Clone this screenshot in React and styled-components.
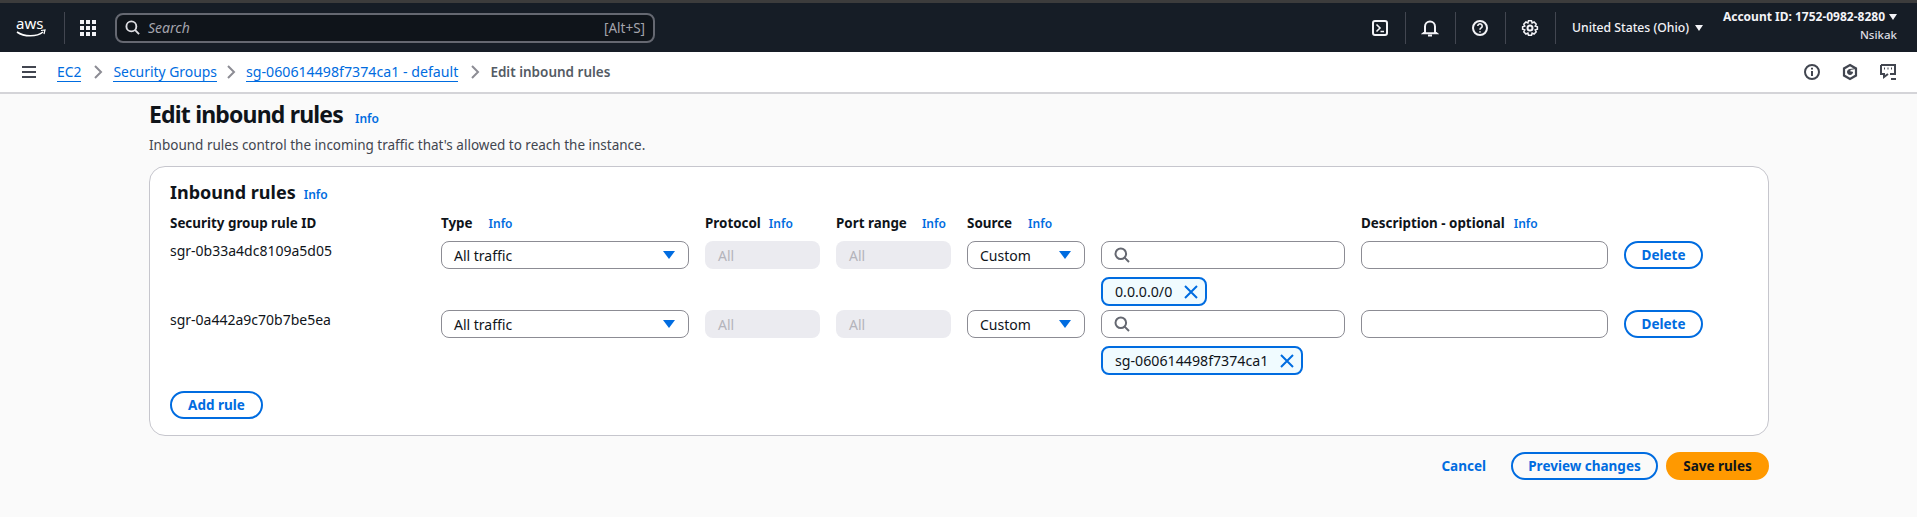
import React from "react";
import styled, { createGlobalStyle } from "styled-components";

const Global = createGlobalStyle`
  html, body { margin: 0; padding: 0; background: #fafafa; }
  body { font-family: "Noto Sans", "Liberation Sans", sans-serif; font-size: 14px; color: #0f141a; overflow: hidden; }
  * { box-sizing: border-box; }
`;
const Page = styled.div`height: 517px; display: flex; flex-direction: column; background: #fafafa;`;
const TopStrip = styled.div`height: 3px; background: #3c3c3c;`;
const TopBar = styled.header`
  height: 49px; background: #161d26; color: #f3f3f7; display: flex; align-items: center; padding-left: 16px;
`;
const Logo = styled.svg`width: 30px; height: 24px; display: block; flex: none; overflow: visible;`;
const BarDivider = styled.span`
  width: 1px; height: 32px; background: #424650; flex: none; margin: ${p => p.$m || "0"};
`;
const Waffle = styled.div`
  display: grid; grid-template-columns: repeat(3, 4px); grid-auto-rows: 4px; gap: 2px; flex: none; margin: 0 19px 0 15px;
  span { background: #f3f3f7; }
`;
const SearchBar = styled.div`
  width: 540px; height: 30px; flex: none; background: #0f141a; border: 2px solid #656871; border-radius: 8px;
  display: flex; align-items: center; padding: 0 8px; gap: 8px; font-size: 14px; color: #a4a4ad;
`;
const SearchHint = styled.i`flex: 1; font-size: 14px;`;
const Shortcut = styled.span`font-size: 13.5px;`;
const Spacer = styled.div`flex: 1;`;
const BarIcon = styled.span`width: 18px; height: 18px; flex: none; display: flex; color: #f3f3f7;`;
const Region = styled.span`font-size: 12.2px; font-weight: 500; display: flex; align-items: center; gap: 6px; margin: 0 0 0 16px; white-space: nowrap; width: 151px;`;
const Caret = styled.span`
  width: 0; height: 0; border-left: 4px solid transparent; border-right: 4px solid transparent; border-top: 6px solid currentColor; flex: none;
`;
const Account = styled.div`display: flex; flex-direction: column; align-items: flex-end; width: 194px; padding-right: 20px; font-size: 12px; line-height: 18px; margin-top: -4px;`;
const AccountId = styled.strong`font-weight: 700; display: flex; align-items: center; gap: 4px; white-space: nowrap; font-size: 12px;`;
const AccountName = styled.span`font-weight: 500; font-size: 11.5px; color: #dedee3;`;

const CrumbBar = styled.nav`
  height: 42px; background: #fff; border-bottom: 2px solid #d4d4d8; display: flex; align-items: center; padding: 0 20px 0 22px;
`;
const Hamburger = styled.div`
  width: 14px; display: flex; flex-direction: column; gap: 3px; margin-right: 21px; flex: none;
  span { height: 2px; background: #424650; }
`;
const CrumbLink = styled.a`color: #006ce0; font-size: ${p => p.$size || 13.9}px; border-bottom: 1px solid #006ce0; line-height: 18px; white-space: nowrap;`;
const CrumbSep = styled.svg`width: 10px; height: 14px; margin: 0 10px 0 ${p => p.$left || 12}px; flex: none;`;
const CrumbCurrent = styled.span`font-weight: 600; font-size: 13.5px; color: #545b64; white-space: nowrap;`;
const CrumbIcons = styled.div`margin-left: auto; display: flex; gap: 20px; align-items: center; color: #424650;`;

const Main = styled.main`padding: 5px 148px 0 149px; display: flex; flex-direction: column;`;
const Title = styled.h1`margin: 0; font-size: 23px; letter-spacing: -0.82px; line-height: 30px; font-weight: 700; display: flex; align-items: baseline; gap: 12px;`;
const Info = styled.a`color: #006ce0; font-size: 12px; font-weight: 600; line-height: 16px; letter-spacing: 0;`;
const Subtitle = styled.p`margin: 6px 0 0; font-size: 13.5px; line-height: 20px; color: #424650;`;
const Card = styled.section`
  margin-top: 11px; height: 270px; background: #fff; border: 1px solid #c6c6cd; border-radius: 16px; padding: 12px 20px 0;
`;
const CardTitle = styled.h2`margin: 0; font-size: 18px; line-height: 26px; font-weight: 700; display: flex; align-items: baseline; gap: 8px;`;
const Grid = styled.div`
  display: grid; grid-template-columns: 255px 248px 115px 115px 118px 244px 247px 79px; column-gap: 16px; align-items: start;
`;
const Head = styled.div`margin: 8px 0 8px; height: 20px; font-size: 13.4px; font-weight: 700; line-height: 20px; display: flex; align-items: baseline; gap: ${p => p.$gap || 16}px; white-space: nowrap;`;
const RuleId = styled.div`height: 28px; line-height: 20px; font-size: 14px; white-space: nowrap;`;
const FieldBox = styled.div`
  height: 28px; border: 1px solid #8c8c94; border-radius: 8px; background: #fff; display: flex; align-items: center;
  padding: 0 13px 0 12px; font-size: 14px; justify-content: space-between; color: #0f141a;
`;
const DisabledBox = styled.div`
  height: 28px; border-radius: 8px; background: #ebebf0; color: #b4b4bb; display: flex; align-items: center; padding: 0 13px; font-size: 14px;
`;
const ArrowDown = styled.span`
  width: 0; height: 0; border-left: 6px solid transparent; border-right: 6px solid transparent; border-top: 8px solid #006ce0; flex: none;
`;
const SearchField = styled(FieldBox)`justify-content: flex-start; padding-left: 12px; color: #656871;`;
const SourceCell = styled.div`display: flex; flex-direction: column; align-items: flex-start; gap: 8px;`;
const FullField = styled.div`width: 100%;`;
const Chip = styled.div`
  height: 29px; border: 2px solid #006ce0; border-radius: 8px; background: #f0fbff; display: inline-flex; align-items: center; gap: 11px; padding: 0 6px 0 12px; font-size: 14.2px; white-space: nowrap;
`;
const RowGap = styled.div`grid-column: 1 / -1; height: ${p => p.$h}px;`;
const PillButton = styled.button`
  font: inherit; font-weight: 700; font-size: 13.5px; height: 28px; border: 2px solid #006ce0; border-radius: 20px; background: #fff; color: #006ce0;
  padding: 0; width: ${p => p.$w}px; display: flex; align-items: center; justify-content: center; white-space: nowrap;
`;
const AddRow = styled.div`margin-top: 16px;`;
const Footer = styled.div`display: flex; justify-content: flex-end; align-items: center; margin-top: 16px;`;
const TextButton = styled.a`color: #006ce0; font-weight: 700; font-size: 13.5px; margin-right: 25px;`;
const PrimaryButton = styled(PillButton)`background: #ff9900; border-color: #ff9900; color: #0f141a; margin-left: 8px;`;
const FooterPreview = styled(PillButton)`background: transparent;`;

const Mag = ({ size = 16, color = "currentColor" }) => (
  <svg width={size} height={size} viewBox="0 0 16 16" fill="none" stroke={color} strokeWidth="2" style={{ flex: "none" }}>
    <circle cx="6.8" cy="6.8" r="5.3" /><path d="M10.6 10.6 15 15" />
  </svg>
);
const Cross = () => (
  <svg width="16" height="16" viewBox="0 0 16 16" fill="none" stroke="#006ce0" strokeWidth="2" style={{ flex: "none" }}>
    <path d="M2 2l12 12M14 2 2 14" />
  </svg>
);
const Chevron = ({ left }) => (
  <CrumbSep $left={left} viewBox="0 0 10 14" fill="none" stroke="#8c8c94" strokeWidth="2"><path d="M2 1l6 6-6 6" /></CrumbSep>
);
const Svg18 = ({ children }) => (
  <svg width="18" height="18" viewBox="0 0 18 18" fill="none" stroke="currentColor" strokeWidth="2">{children}</svg>
);

const rows = [
  { id: "sgr-0b33a4dc8109a5d05", chip: "0.0.0.0/0" },
  { id: "sgr-0a442a9c70b7be5ea", chip: "sg-060614498f7374ca1" },
];

export default function App() {
  return (
    <Page>
      <Global />
      <TopStrip />
      <TopBar>
        <Logo viewBox="0 0 30 24" fill="none">
          <text x="0" y="13" fontFamily="Noto Sans" fontSize="15" fill="#fff">aws</text>
          <path d="M1 16c7 5 20 5 26 0" stroke="#fff" strokeWidth="1.6" />
          <path d="M25 14.5l4-.5-1 4" stroke="#fff" strokeWidth="1.2" />
        </Logo>
        <BarDivider $m="0 0 0 18px" />
        <Waffle>{Array.from({ length: 9 }, (_, i) => <span key={i} />)}</Waffle>
        <SearchBar>
          <Mag size={15} color="#dedee3" />
          <SearchHint>Search</SearchHint>
          <Shortcut>[Alt+S]</Shortcut>
        </SearchBar>
        <Spacer />
        <BarIcon>
          <Svg18><rect x="2" y="2" width="14" height="14" rx="2" /><path d="M5.5 5.5 9 9l-3.5 3.5M9.5 12.5H13" strokeWidth="1.6" /></Svg18>
        </BarIcon>
        <BarDivider $m="0 15px 0 16px" />
        <BarIcon>
          <Svg18><path d="M4 13V7.5a5 5 0 0 1 10 0V13l1.5 1.2H2.5z" /><path d="M7 16.5h4" /></Svg18>
        </BarIcon>
        <BarDivider $m="0 15px 0 16px" />
        <BarIcon>
          <Svg18><circle cx="9" cy="9" r="7" /><path d="M6.8 7a2.2 2.2 0 1 1 3.4 1.9c-.8.5-1.2 1-1.2 1.8" strokeWidth="1.6" /><path d="M9 12.2v1.4" strokeWidth="1.6" /></Svg18>
        </BarIcon>
        <BarDivider $m="0 15px 0 16px" />
        <BarIcon>
          <Svg18><circle cx="9" cy="9" r="2.5" /><path d="M7.5 1.8h3l.6 2.2 2-1 2.1 2.1-1 2 2.2.6v2.6l-2.2.6 1 2-2.1 2.1-2-1-.6 2.2h-3l-.6-2.2-2 1-2.1-2.1 1-2-2.2-.6V7.7l2.2-.6-1-2L4.9 3l2 1z" strokeWidth="1.5" /></Svg18>
        </BarIcon>
        <BarDivider $m="0 0 0 16px" />
        <Region>United States (Ohio) <Caret /></Region>
        <Account>
          <AccountId>Account ID: 1752-0982-8280 <Caret /></AccountId>
          <AccountName>Nsikak</AccountName>
        </Account>
      </TopBar>
      <CrumbBar>
        <Hamburger><span /><span /><span /></Hamburger>
        <CrumbLink>EC2</CrumbLink><Chevron />
        <CrumbLink>Security Groups</CrumbLink><Chevron left={9} />
        <CrumbLink $size={14.2}>sg-060614498f7374ca1 - default</CrumbLink><Chevron />
        <CrumbCurrent>Edit inbound rules</CrumbCurrent>
        <CrumbIcons>
          <Svg18><circle cx="9" cy="9" r="7" /><path d="M9 8v5M9 4.8v1.8" /></Svg18>
          <Svg18><path d="M9 2l6 3.5v7L9 16l-6-3.5v-7z" strokeWidth="2.2" /><path d="M9 6.5a2.5 2.5 0 1 0 2.5 2.5L9 9zM9 6.5l6-1" fill="currentColor" strokeWidth="1" /></Svg18>
          <Svg18><path d="M2 2h14v9h-5M2 2v9h3v3l4-3" /><path d="M5 5.5h1M8.5 5.5h1M12 5.5h1" /><path d="M12 16h5" /></Svg18>
        </CrumbIcons>
      </CrumbBar>
      <Main>
        <Title>Edit inbound rules <Info>Info</Info></Title>
        <Subtitle>Inbound rules control the incoming traffic that's allowed to reach the instance.</Subtitle>
        <Card>
          <CardTitle>Inbound rules <Info>Info</Info></CardTitle>
          <Grid>
            <Head>Security group rule ID</Head>
            <Head>Type <Info>Info</Info></Head>
            <Head $gap={8}>Protocol <Info>Info</Info></Head>
            <Head $gap={15}>Port range <Info>Info</Info></Head>
            <Head>Source <Info>Info</Info></Head>
            <Head />
            <Head $gap={9}>Description - optional <Info>Info</Info></Head>
            <Head />
            {rows.map((r, i) => (
              <React.Fragment key={r.id}>
                <RuleId>{r.id}</RuleId>
                <FieldBox>All traffic <ArrowDown /></FieldBox>
                <DisabledBox>All</DisabledBox>
                <DisabledBox>All</DisabledBox>
                <FieldBox>Custom <ArrowDown /></FieldBox>
                <SourceCell>
                  <FullField><SearchField><Mag size={16} /></SearchField></FullField>
                  <Chip>{r.chip} <Cross /></Chip>
                </SourceCell>
                <FieldBox />
                <PillButton $w={79}>Delete</PillButton>
                {i === 0 && <RowGap $h={4} />}
              </React.Fragment>
            ))}
          </Grid>
          <AddRow><PillButton $w={93}>Add rule</PillButton></AddRow>
        </Card>
        <Footer>
          <TextButton>Cancel</TextButton>
          <FooterPreview $w={147}>Preview changes</FooterPreview>
          <PrimaryButton $w={103}>Save rules</PrimaryButton>
        </Footer>
      </Main>
    </Page>
  );
}
